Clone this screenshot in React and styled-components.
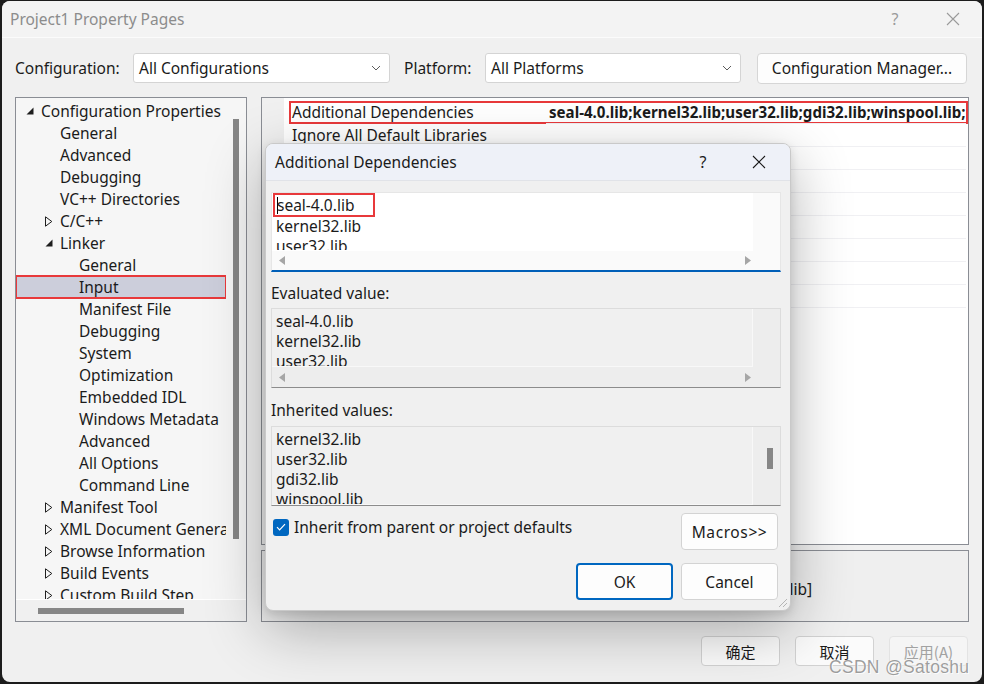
import React from 'react';
import styled, { createGlobalStyle } from 'styled-components';

const GlobalStyle = createGlobalStyle`
  html, body {
    margin: 0;
    padding: 0;
    background: #1c1c1c;
  }
  body {
    font-family: "Noto Sans", "Open Sans", sans-serif;
    color: #1b1b1b;
  }
  * {
    box-sizing: border-box;
  }
`;

const Screen = styled.div`
  position: relative;
  width: 984px;
  height: 684px;
  padding: 1px 2px 2px 2px;
  background: #1c1c1c;
  overflow: hidden;
`;

const Window = styled.div`
  display: flex;
  flex-direction: column;
  height: 100%;
  background: #f0f0f0;
  border-radius: 8px;
  overflow: hidden;
`;

const TitleBar = styled.div`
  display: flex;
  align-items: center;
  height: 37px;
  padding-left: 8px;
  background: #f3f3f3;
  border-bottom: 1px solid #fbfbfb;
  color: #8c8c8c;
  font-size: 15.5px;
`;

const TitleText = styled.div`
  flex: 1;
`;

const CaptionButton = styled.div`
  display: flex;
  align-items: center;
  justify-content: center;
  width: ${(p) => p.$w}px;
  color: ${(p) => p.$color || '#9a9a9a'};
  font-size: 16px;
`;

const Toolbar = styled.div`
  display: flex;
  align-items: center;
  height: 30px;
  margin-top: 15px;
  padding-left: 13px;
  font-size: 15.5px;
`;

const FieldLabel = styled.div`
  width: ${(p) => p.$w}px;
  flex: none;
`;

const Combo = styled.div`
  display: flex;
  align-items: center;
  justify-content: space-between;
  width: ${(p) => p.$w}px;
  height: 30px;
  padding: 0 8px 0 5px;
  background: #ffffff;
  border: 1px solid #d4d4d4;
  border-radius: 3px;
  margin-right: ${(p) => p.$mr || 0}px;
`;

const ToolButton = styled.div`
  display: flex;
  align-items: center;
  justify-content: center;
  width: 210px;
  height: 31px;
  background: #fdfdfd;
  border: 1px solid #d6d6d6;
  border-radius: 4px;
`;

const Main = styled.div`
  display: grid;
  grid-template-columns: 232px 708px;
  column-gap: 14px;
  height: 525px;
  margin-top: 14px;
  padding-left: 13px;
`;

const TreePanel = styled.div`
  display: grid;
  grid-template-columns: 210px 20px;
  grid-template-rows: 501px 22px;
  border: 1px solid #8a8d94;
  background: #f0f0f0;
  font-size: 15.5px;
`;

const TreeList = styled.div`
  padding-top: 2px;
  background: #f6f6f6;
  overflow: hidden;
`;

const TreeRow = styled.div`
  display: flex;
  align-items: center;
  height: 22px;
  padding-left: ${(p) => 10 + p.$level * 19}px;
  white-space: nowrap;
  background: ${(p) => (p.$selected ? '#cccedb' : 'transparent')};
  outline: ${(p) => (p.$selected ? '2px solid #e8393b' : 'none')};
  outline-offset: -1px;
`;

const ArrowSlot = styled.span`
  display: inline-flex;
  align-items: center;
  width: 15px;
  flex: none;
`;

const VScroll = styled.div`
  padding: 21px 0 0 7px;
  background: #f6f6f6;
`;

const VThumb = styled.div`
  width: 6px;
  height: ${(p) => p.$h}px;
  background: #868686;
`;

const HScroll = styled.div`
  grid-column: 1 / span 2;
  padding: 8px 0 0 22px;
  border-top: 1px solid #ffffff;
`;

const HThumb = styled.div`
  width: 146px;
  height: 6px;
  background: #868686;
`;

const RightColumn = styled.div`
  display: flex;
  flex-direction: column;
  gap: 5px;
`;

const PropGrid = styled.div`
  display: flex;
  height: 448px;
  border: 1px solid #8a8d94;
  background: #ffffff;
  font-size: 15.5px;
`;

const Gutter = styled.div`
  width: 22px;
  flex: none;
  background: #f0f0f0;
`;

const PropRows = styled.div`
  flex: 1;
  padding: 3px 0 0 5px;
  overflow: hidden;
`;

const PropRow = styled.div`
  display: flex;
  height: 23px;
  border: 2px solid ${(p) => (p.$marked ? '#e8393b' : 'transparent')};
`;

const PropName = styled.div`
  width: 255px;
  flex: none;
  padding-left: 1px;
  line-height: 19px;
  white-space: nowrap;
  overflow: hidden;
`;

const PropValue = styled.div`
  flex: 1;
  padding-left: 3px;
  line-height: 19px;
  font-size: 15.1px;
  font-weight: 700;
  white-space: nowrap;
  overflow: hidden;
  border-bottom: 1px solid #f0f0f3;
  margin-bottom: -2px;
`;

const Description = styled.div`
  height: 72px;
  padding: 5px 5px 0;
  border: 1px solid #8a8d94;
  background: #efefef;
  font-size: 15.5px;
  line-height: 22px;
`;

const DescTitle = styled.div`
  font-weight: 700;
`;

const Footer = styled.div`
  display: flex;
  justify-content: flex-end;
  gap: 15px;
  margin-top: 14px;
  padding-right: 14px;
`;

const FooterButton = styled.div`
  display: flex;
  align-items: center;
  justify-content: center;
  width: 79px;
  height: 30px;
  border: 1px solid ${(p) => (p.$disabled ? '#e3e3e3' : '#d2d2d2')};
  border-radius: 4px;
  background: ${(p) => (p.$disabled ? '#f5f5f5' : '#fbfbfb')};
  color: ${(p) => (p.$disabled ? '#a2a2a2' : '#1b1b1b')};
  font-family: "Noto Sans CJK SC", "Noto Sans", sans-serif;
  font-size: 15px;
`;

const Dialog = styled.div`
  position: absolute;
  left: 265px;
  top: 143px;
  width: 526px;
  height: 468px;
  display: flex;
  flex-direction: column;
  background: #f0f0f0;
  border: 1px solid #c9c9c9;
  border-radius: 8px;
  box-shadow: 0 18px 60px rgba(0, 0, 0, 0.3), 0 3px 10px rgba(0, 0, 0, 0.12);
  overflow: hidden;
  font-size: 15.5px;
`;

const DialogTitle = styled.div`
  display: flex;
  align-items: center;
  height: 37px;
  padding-left: 9px;
  background: #eef1f8;
  border-bottom: 1px solid #e1e3e8;
  color: #1b1b1b;
`;

const DialogBody = styled.div`
  flex: 1;
  display: flex;
  flex-direction: column;
  padding: 11px 9px 0 5px;
  position: relative;
`;

const ValueBox = styled.div`
  display: grid;
  grid-template-columns: 481px 1fr;
  grid-template-rows: ${(p) => (p.$hscroll ? '58px 1fr' : '1fr')};
  height: 80px;
  background: ${(p) => (p.$editable ? '#fafafa' : '#ededed')};
  border: 1px solid ${(p) => (p.$editable ? '#e6e6e6' : '#dcdcdc')};
  border-bottom: ${(p) => (p.$editable ? '2px solid #005fb8' : '1px solid #8c8c8c')};
`;

const ValueText = styled.div`
  padding: 2px 0 0 4px;
  background: ${(p) => (p.$editable ? '#ffffff' : '#f0f0f0')};
  line-height: 20px;
  overflow: hidden;
  border-right: 1px solid ${(p) => (p.$editable ? '#ffffff' : '#f8f8f8')};
  border-bottom: 1px solid ${(p) => (p.$editable ? '#ffffff' : '#f8f8f8')};
`;

const Line = styled.div`
  white-space: nowrap;
`;

const Marked = styled.span`
  display: inline-block;
  width: 102px;
  height: 24px;
  margin: -3px 0 -1px -3px;
  padding-left: 2px;
  line-height: 20px;
  border: 2px solid #e8393b;
`;

const Caret = styled.span`
  display: inline-block;
  width: 1px;
  height: 17px;
  margin-right: -1px;
  vertical-align: -3px;
  background: #000;
`;

const SideScroll = styled.div`
  padding: 21px 0 0 14px;
`;

const ScrollRow = styled.div`
  grid-column: 1 / span 2;
  display: flex;
  align-items: center;
  justify-content: space-between;
  padding: 0 29px 0 7px;
`;

const SectionLabel = styled.div`
  height: 20px;
  line-height: 20px;
  margin: ${(p) => p.$mt}px 0 ${(p) => p.$mb}px;
`;

const OptionsRow = styled.div`
  display: flex;
  align-items: flex-start;
  justify-content: space-between;
  margin-top: 7px;
  padding-left: 2px;
`;

const CheckLabel = styled.label`
  display: flex;
  align-items: center;
  gap: 5px;
  margin-top: 3px;
`;

const CheckBox = styled.span`
  display: inline-flex;
  align-items: center;
  justify-content: center;
  width: 16px;
  height: 17px;
  border-radius: 3px;
  background: #0067c0;
`;

const ButtonRow = styled.div`
  display: flex;
  justify-content: flex-end;
  gap: 8px;
  margin-top: 13px;
  padding-right: 3px;
`;

const DialogButton = styled.div`
  display: flex;
  align-items: center;
  justify-content: center;
  width: 97px;
  height: 37px;
  margin-right: ${(p) => p.$mr || 0}px;
  background: #fdfdfd;
  border: ${(p) => (p.$primary ? '2px solid #0067c0' : '1px solid #d3d3d3')};
  border-radius: 4px;
  letter-spacing: ${(p) => p.$spread || 0}px;
`;

const Grip = styled.svg`
  position: absolute;
  right: 2px;
  bottom: 2px;
`;

const Watermark = styled.div`
  position: absolute;
  left: 829px;
  top: 657px;
  font-family: "Liberation Sans", Arial, sans-serif;
  font-size: 17.5px;
  letter-spacing: 0.3px;
  color: rgba(125, 125, 125, 0.75);
  text-shadow: 0 0 1px #ffffff, 1px 1px 0 rgba(255, 255, 255, 0.8);
`;

const treeItems = [
  { label: 'Configuration Properties', level: 0, arrow: 'open' },
  { label: 'General', level: 1 },
  { label: 'Advanced', level: 1 },
  { label: 'Debugging', level: 1 },
  { label: 'VC++ Directories', level: 1 },
  { label: 'C/C++', level: 1, arrow: 'closed' },
  { label: 'Linker', level: 1, arrow: 'open' },
  { label: 'General', level: 2 },
  { label: 'Input', level: 2, selected: true },
  { label: 'Manifest File', level: 2 },
  { label: 'Debugging', level: 2 },
  { label: 'System', level: 2 },
  { label: 'Optimization', level: 2 },
  { label: 'Embedded IDL', level: 2 },
  { label: 'Windows Metadata', level: 2 },
  { label: 'Advanced', level: 2 },
  { label: 'All Options', level: 2 },
  { label: 'Command Line', level: 2 },
  { label: 'Manifest Tool', level: 1, arrow: 'closed' },
  { label: 'XML Document Generator', level: 1, arrow: 'closed' },
  { label: 'Browse Information', level: 1, arrow: 'closed' },
  { label: 'Build Events', level: 1, arrow: 'closed' },
  { label: 'Custom Build Step', level: 1, arrow: 'closed' },
  { label: 'Code Analysis', level: 1, arrow: 'closed' },
];

const properties = [
  { name: 'Additional Dependencies', value: 'seal-4.0.lib;kernel32.lib;user32.lib;gdi32.lib;winspool.lib;comdlg32.lib;advapi32.lib;shell32.lib', marked: true },
  { name: 'Ignore All Default Libraries', value: '' },
  { name: 'Ignore Specific Default Libraries', value: '' },
  { name: 'Module Definition File', value: '' },
  { name: 'Add Module to Assembly', value: '' },
  { name: 'Embed Managed Resource File', value: '' },
  { name: 'Force Symbol References', value: '' },
  { name: 'Delay Loaded Dlls', value: '' },
  { name: 'Assembly Link Resource', value: '' },
];

const evaluated = ['seal-4.0.lib', 'kernel32.lib', 'user32.lib', 'gdi32.lib'];
const inherited = ['kernel32.lib', 'user32.lib', 'gdi32.lib', 'winspool.lib', 'comdlg32.lib'];

function TreeArrow({ kind }) {
  if (kind === 'open') {
    return (
      <svg width="8" height="8" viewBox="0 0 8 8">
        <polygon points="7.5,0.5 7.5,7.5 0.5,7.5" fill="#1e1e1e" />
      </svg>
    );
  }
  if (kind === 'closed') {
    return (
      <svg width="8" height="11" viewBox="0 0 8 11">
        <polygon points="0.5,0.8 6.8,5.5 0.5,10.2" fill="none" stroke="#1e1e1e" strokeWidth="1" />
      </svg>
    );
  }
  return null;
}

function CloseIcon({ size, color }) {
  return (
    <svg width={size} height={size} viewBox="0 0 14 14">
      <path d="M1 1L13 13M13 1L1 13" stroke={color} strokeWidth="1.1" />
    </svg>
  );
}

function Chevron() {
  return (
    <svg width="10" height="6" viewBox="0 0 10 6">
      <path d="M1 1l4 4 4-4" fill="none" stroke="#5c5c5c" strokeWidth="1" />
    </svg>
  );
}

function ScrollArrow({ dir }) {
  return (
    <svg width="6" height="9" viewBox="0 0 6 9">
      {dir === 'left'
        ? <polygon points="6,0 6,9 0,4.5" fill="#a6a6a6" />
        : <polygon points="0,0 0,9 6,4.5" fill="#a6a6a6" />}
    </svg>
  );
}

export default function App() {
  return (
    <Screen>
      <GlobalStyle />
      <Window>
        <TitleBar>
          <TitleText>Project1 Property Pages</TitleText>
          <CaptionButton $w={58}>?</CaptionButton>
          <CaptionButton $w={58}>
            <CloseIcon size={14} color="#9a9a9a" />
          </CaptionButton>
        </TitleBar>

        <Toolbar>
          <FieldLabel $w={118}>Configuration:</FieldLabel>
          <Combo $w={257} $mr={14}>
            <span>All Configurations</span>
            <Chevron />
          </Combo>
          <FieldLabel $w={81}>Platform:</FieldLabel>
          <Combo $w={256} $mr={16}>
            <span>All Platforms</span>
            <Chevron />
          </Combo>
          <ToolButton>Configuration Manager...</ToolButton>
        </Toolbar>

        <Main>
          <TreePanel>
            <TreeList>
              {treeItems.map((item, i) => (
                <TreeRow key={i} $level={item.level} $selected={item.selected}>
                  <ArrowSlot>
                    <TreeArrow kind={item.arrow} />
                  </ArrowSlot>
                  {item.label}
                </TreeRow>
              ))}
            </TreeList>
            <VScroll>
              <VThumb $h={420} />
            </VScroll>
            <HScroll>
              <HThumb />
            </HScroll>
          </TreePanel>

          <RightColumn>
            <PropGrid>
              <Gutter />
              <PropRows>
                {properties.map((p) => (
                  <PropRow key={p.name} $marked={p.marked}>
                    <PropName>{p.name}</PropName>
                    <PropValue>{p.value}</PropValue>
                  </PropRow>
                ))}
              </PropRows>
            </PropGrid>
            <Description>
              <DescTitle>Additional Dependencies</DescTitle>
              <div>Specifies additional items to add to the link command line [i.e. kernel32.lib]</div>
            </Description>
          </RightColumn>
        </Main>

        <Footer>
          <FooterButton>确定</FooterButton>
          <FooterButton>取消</FooterButton>
          <FooterButton $disabled>应用(A)</FooterButton>
        </Footer>
      </Window>

      <Dialog>
        <DialogTitle>
          <TitleText>Additional Dependencies</TitleText>
          <CaptionButton $w={50} $color="#1b1b1b">?</CaptionButton>
          <CaptionButton $w={62}>
            <CloseIcon size={14} color="#1b1b1b" />
          </CaptionButton>
        </DialogTitle>
        <DialogBody>
          <ValueBox $editable $hscroll>
            <ValueText $editable>
              <Line>
                <Marked>
                  <Caret />
                  seal-4.0.lib
                </Marked>
              </Line>
              <Line>kernel32.lib</Line>
              <Line>user32.lib</Line>
              <Line>gdi32.lib</Line>
            </ValueText>
            <div />
            <ScrollRow>
              <ScrollArrow dir="left" />
              <ScrollArrow dir="right" />
            </ScrollRow>
          </ValueBox>

          <SectionLabel $mt={11} $mb={5}>Evaluated value:</SectionLabel>
          <ValueBox $hscroll>
            <ValueText>
              {evaluated.map((t) => <Line key={t}>{t}</Line>)}
            </ValueText>
            <div />
            <ScrollRow>
              <ScrollArrow dir="left" />
              <ScrollArrow dir="right" />
            </ScrollRow>
          </ValueBox>

          <SectionLabel $mt={12} $mb={6}>Inherited values:</SectionLabel>
          <ValueBox>
            <ValueText>
              {inherited.map((t) => <Line key={t}>{t}</Line>)}
            </ValueText>
            <SideScroll>
              <VThumb $h={21} />
            </SideScroll>
          </ValueBox>

          <OptionsRow>
            <CheckLabel>
              <CheckBox>
                <svg width="10" height="8" viewBox="0 0 10 8">
                  <path d="M1 4.2l2.6 2.6L9 1.2" fill="none" stroke="#ffffff" strokeWidth="1.2" />
                </svg>
              </CheckBox>
              Inherit from parent or project defaults
            </CheckLabel>
            <DialogButton $mr={3} $spread={0.6}>Macros&gt;&gt;</DialogButton>
          </OptionsRow>

          <ButtonRow>
            <DialogButton $primary>OK</DialogButton>
            <DialogButton>Cancel</DialogButton>
          </ButtonRow>

          <Grip width="12" height="12" viewBox="0 0 12 12">
            <path d="M11 3L3 11M11 7L7 11" stroke="#b5b5b5" strokeWidth="1" />
          </Grip>
        </DialogBody>
      </Dialog>

      <Watermark>CSDN @Satoshu</Watermark>
    </Screen>
  );
}
